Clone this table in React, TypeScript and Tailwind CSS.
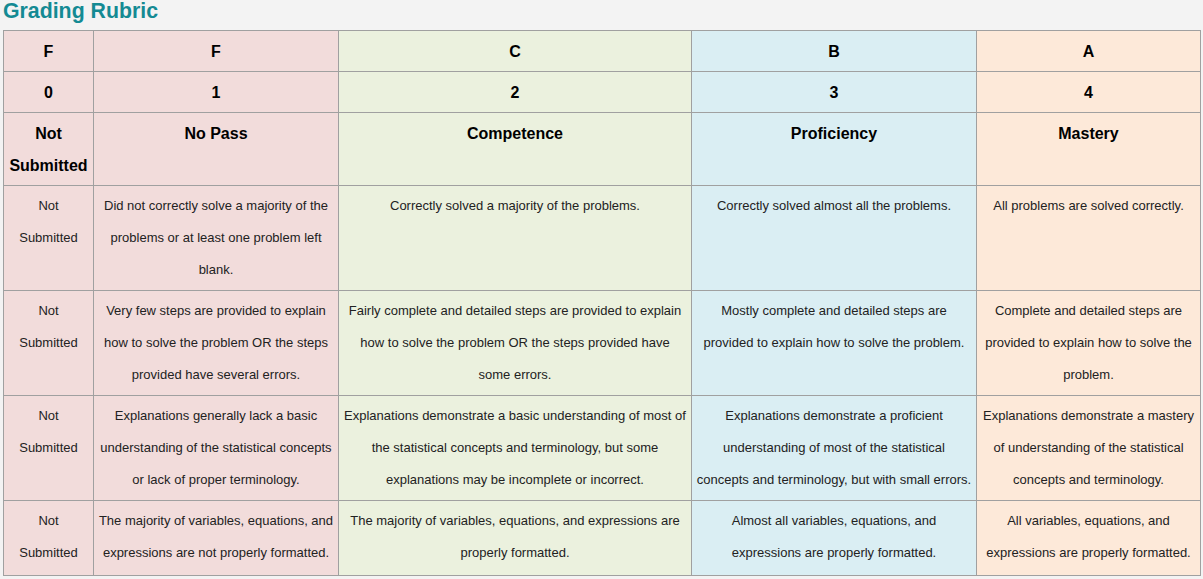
const COLS = [
  { bg: 'bg-[#f2dcdb]', w: 'w-[90px]' },
  { bg: 'bg-[#f2dcdb]', w: 'w-[245px]' },
  { bg: 'bg-[#ebf1de]', w: 'w-[353px]' },
  { bg: 'bg-[#daeef3]', w: 'w-[285px]' },
  { bg: 'bg-[#fde9d9]', w: 'w-[224px]' },
];

const HEADER_ROWS = [
  ['F', 'F', 'C', 'B', 'A'],
  ['0', '1', '2', '3', '4'],
  ['Not Submitted', 'No Pass', 'Competence', 'Proficiency', 'Mastery'],
];

const BODY_ROWS = [
  [
    'Not Submitted',
    'Did not correctly solve a majority of the problems or at least one problem left blank.',
    'Correctly solved a majority of the problems.',
    'Correctly solved almost all the problems.',
    'All problems are solved correctly.',
  ],
  [
    'Not Submitted',
    'Very few steps are provided to explain how to solve the problem OR the steps provided have several errors.',
    'Fairly complete and detailed steps are provided to explain how to solve the problem OR the steps provided have some errors.',
    'Mostly complete and detailed steps are provided to explain how to solve the problem.',
    'Complete and detailed steps are provided to explain how to solve the problem.',
  ],
  [
    'Not Submitted',
    'Explanations generally lack a basic understanding of the statistical concepts or lack of proper terminology.',
    'Explanations demonstrate a basic understanding of most of the statistical concepts and terminology, but some explanations may be incomplete or incorrect.',
    'Explanations demonstrate a proficient understanding of most of the statistical concepts and terminology, but with small errors.',
    'Explanations demonstrate a mastery of understanding of the statistical concepts and terminology.',
  ],
  [
    'Not Submitted',
    'The majority of variables, equations, and expressions are not properly formatted.',
    'The majority of variables, equations, and expressions are properly formatted.',
    'Almost all variables, equations, and expressions are properly formatted.',
    'All variables, equations, and expressions are properly formatted.',
  ],
];

export default function App() {
  return (
    <div className="min-h-[579px] bg-[#f3f3f3] pl-[3px] font-['Liberation_Sans',Arial,sans-serif]">
      <h2 className="h-[30px] text-[21.3px] font-bold leading-[22px] text-[#148a93]">Grading Rubric</h2>
      <table className="w-[1197px] table-fixed border-collapse border border-[#a0a0a0]">
        <colgroup>
          {COLS.map((c, i) => (
            <col key={i} className={c.w} />
          ))}
        </colgroup>
        <thead>
          {HEADER_ROWS.map((row, r) => (
            <tr key={r}>
              {row.map((text, i) => (
                <th
                  key={i}
                  className={`${COLS[i].bg} border border-[#a0a0a0] px-1 pt-[5px] pb-[3px] align-top text-center text-[16px] font-bold leading-[32px] text-black`}
                >
                  {text}
                </th>
              ))}
            </tr>
          ))}
        </thead>
        <tbody>
          {BODY_ROWS.map((row, r) => (
            <tr key={r}>
              {row.map((text, i) => (
                <td
                  key={i}
                  className={`${COLS[i].bg} border border-[#a0a0a0] px-1 pt-1 ${r === BODY_ROWS.length - 1 ? 'pb-[6px]' : 'pb-1'} align-top text-center text-[13px] leading-[32px] text-[#222]`}
                >
                  {text}
                </td>
              ))}
            </tr>
          ))}
        </tbody>
      </table>
    </div>
  );
}
